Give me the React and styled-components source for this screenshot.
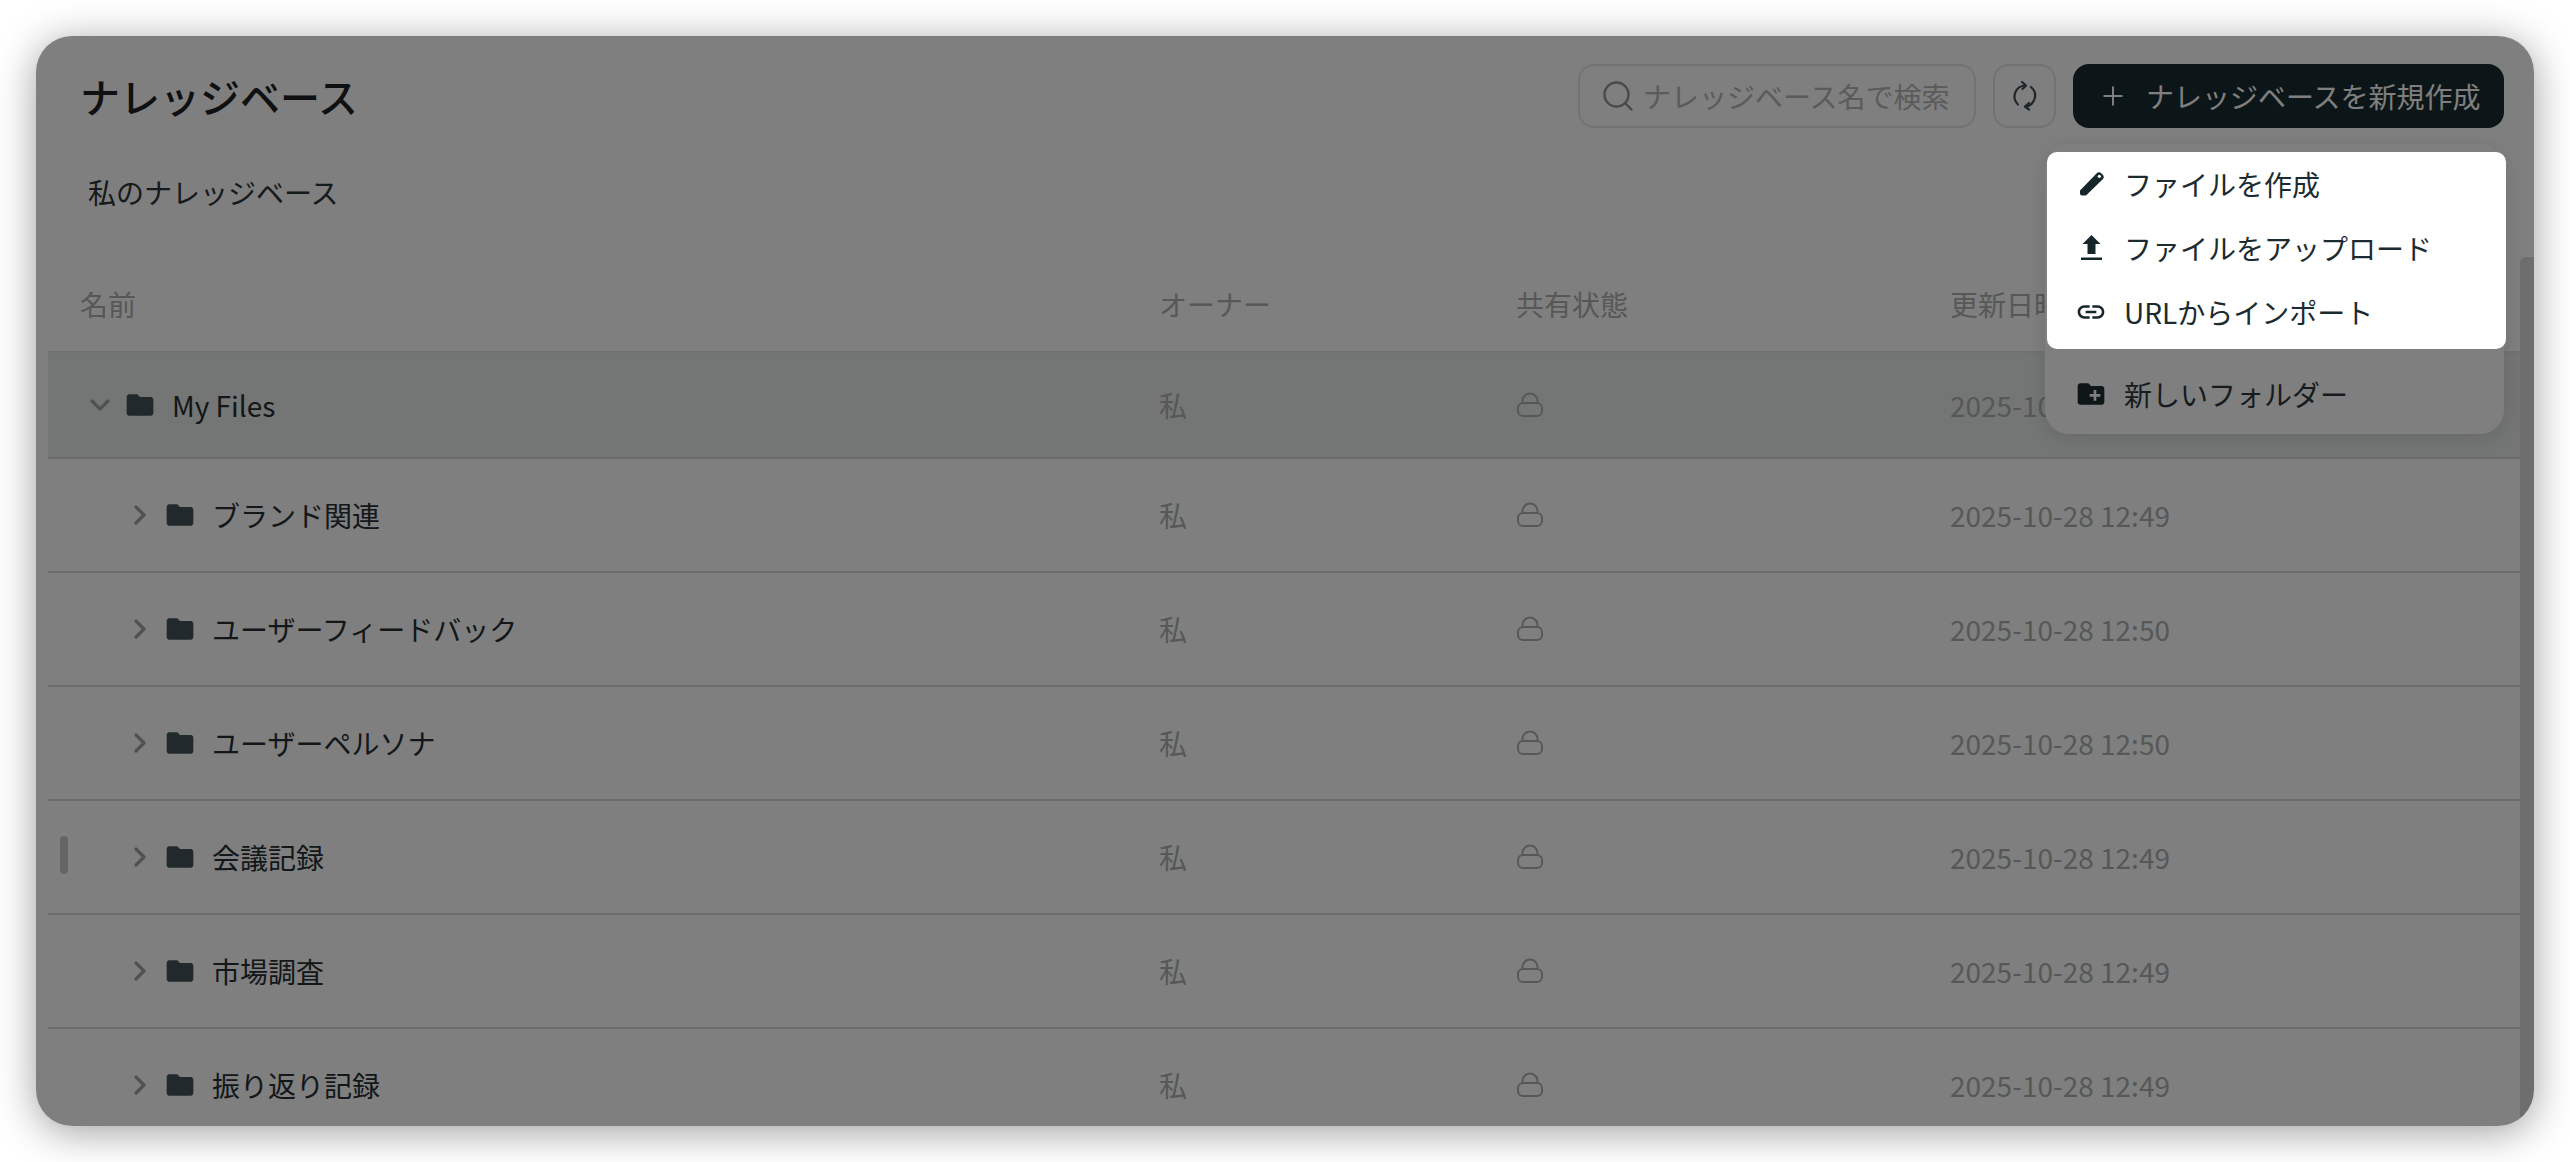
import React from "react";
import styled, { createGlobalStyle } from "styled-components";
import { Search, Plus, ChevronRight, ChevronDown } from "lucide-react";
import { MdFolder, MdLink, MdCreateNewFolder } from "react-icons/md";

const GlobalStyle = createGlobalStyle`
  html, body {
    margin: 0;
    background: #fff;
    font-family: "Noto Sans CJK JP", "Noto Sans", sans-serif;
  }
  * { box-sizing: border-box; }
`;

const Page = styled.div`
  width: 2570px;
  height: 1162px;
  padding: 36px;
  overflow: hidden;
`;

const Window = styled.div`
  position: relative;
  height: 1090px;
  background: #fff;
  border-radius: 36px;
  overflow: hidden;
  box-shadow: 0 6px 40px rgba(0, 0, 0, 0.38);
`;

const Header = styled.header`
  display: flex;
  align-items: center;
  padding: 28px 30px 0 44px;
`;

const Title = styled.h1`
  flex: 1;
  margin: 0;
  font-size: 40px;
  line-height: 64px;
  font-weight: 500;
  color: #1c2022;
`;

const SearchBox = styled.div`
  width: 398px;
  height: 64px;
  display: flex;
  align-items: center;
  gap: 7px;
  padding-left: 20px;
  border: 2px solid #e4e4e4;
  border-radius: 16px;
  font-size: 28px;
  color: #b4b6b6;
  white-space: nowrap;
  svg { color: #909494; }
`;

const RefreshButton = styled.div`
  width: 63px;
  height: 64px;
  margin-left: 17px;
  display: flex;
  align-items: center;
  justify-content: center;
  border: 2px solid #e4e4e4;
  border-radius: 16px;
  color: #3f4d52;
`;

const CreateButton = styled.div`
  width: 431px;
  height: 64px;
  margin-left: 17px;
  display: flex;
  align-items: center;
  gap: 18px;
  padding-left: 25px;
  background: #182a2e;
  border-radius: 16px;
  color: #fff;
  font-size: 28px;
  white-space: nowrap;
`;

const Tab = styled.div`
  margin: 44px 0 59px 52px;
  font-size: 28px;
  line-height: 40px;
  color: #2a3438;
`;

const Table = styled.div`
  margin: 0 14px 0 12px;
`;

const columns = "1079px 357px 434px 1fr";

const HeadRow = styled.div`
  display: grid;
  grid-template-columns: ${columns};
  align-items: center;
  height: 66px;
  margin-bottom: 14px;
  padding-left: 32px;
  font-size: 28px;
  color: #adb0b0;
`;

const Row = styled.div`
  display: grid;
  grid-template-columns: ${columns};
  align-items: center;
  height: ${(props) => (props.$open ? "108px" : "114px")};
  padding-left: 32px;
  background: ${(props) => (props.$open ? "#e9ebeb" : "transparent")};
  border-top: ${(props) => (props.$open ? "2px solid #e2e4e4" : "none")};
  border-bottom: 2px solid #d6d6d6;
  font-size: 28px;
  line-height: 40px;
`;

const NameCell = styled.div`
  display: flex;
  align-items: center;
  padding-left: ${(props) => props.$depth * 40}px;
  color: #262f33;
`;

const Toggle = styled.span`
  width: 40px;
  display: flex;
  justify-content: center;
  color: #a0a4a4;
`;

const FolderIcon = styled(MdFolder)`
  margin: 0 16px 0 4px;
  color: #445258;
`;

const MutedCell = styled.div`
  color: #adb0b0;
  svg { display: block; color: #adb0b0; }
`;

const Scrollbar = styled.div`
  position: absolute;
  top: 221px;
  right: 0;
  bottom: 0;
  width: 14px;
  background: #dcdcdc;
  border-radius: 6px 0 0 0;
`;

const DragHandle = styled.div`
  position: absolute;
  left: 24px;
  top: 800px;
  width: 8px;
  height: 38px;
  border-radius: 4px;
  background: #cbcbcb;
`;

const Menu = styled.div`
  position: absolute;
  top: 108px;
  right: 30px;
  width: 459px;
  height: 290px;
  padding-top: 218px;
  background: #fff;
  border-radius: 24px;
  box-shadow: 0 4px 24px rgba(0, 0, 0, 0.12);
`;

const Overlay = styled.div`
  position: absolute;
  inset: 0;
  background: rgba(0, 0, 0, 0.5);
`;

const MenuSpotlight = styled.div`
  position: absolute;
  top: 116px;
  right: 28px;
  width: 459px;
  height: 197px;
  background: #fff;
  border-radius: 10px;
`;

const MenuItem = styled.div`
  height: 64px;
  display: flex;
  align-items: center;
  gap: 17px;
  padding-left: ${(props) => (props.$lower ? "30px" : "28px")};
  font-size: 28px;
  color: ${(props) => (props.$lower ? "#2c373b" : "#1b2b30")};
  white-space: nowrap;
  svg { flex: none; color: ${(props) => (props.$lower ? "#1d2c30" : "#15262b")}; }
`;

function LockIcon() {
  return (
    <svg width="28" height="26" viewBox="0 0 28 26" fill="none" stroke="currentColor" strokeWidth="2">
      <rect x="2" y="11" width="24" height="13" rx="5" />
      <path d="M6.5 11V9a7.5 7.5 0 0 1 15 0v2" />
    </svg>
  );
}

function RefreshIcon() {
  return (
    <svg width="30" height="32" viewBox="0 0 30 32" fill="none" stroke="currentColor" strokeWidth="2.2" strokeLinecap="round" strokeLinejoin="round">
      <path d="M15 5.5A11 11 0 0 0 8 24.5" />
      <path d="M12 2l4 3.5L12.5 9" />
      <path d="M21 7A11 11 0 0 1 15 26.5" />
      <path d="M19 23l-4 3.5 4 3" />
    </svg>
  );
}

function PencilIcon() {
  return (
    <svg width="32" height="32" viewBox="0 0 32 32">
      <path fill="currentColor" d="M5 25.5V22.5L21.5 5.5a3.5 3.5 0 0 1 5 0l1 1a3.5 3.5 0 0 1 0 5L11 27.5H7a2 2 0 0 1-2-2z" />
      <circle cx="24.3" cy="8.3" r="1.6" fill="#fff" />
    </svg>
  );
}

function UploadIcon() {
  return (
    <svg width="32" height="32" viewBox="0 0 32 32" fill="currentColor">
      <path d="M16.5 3L25.5 12H20.5V22H12.5V12H7.5Z" />
      <rect x="6" y="25.5" width="21" height="2.5" />
    </svg>
  );
}

const rows = [
  { name: "ブランド関連", date: "2025-10-28 12:49" },
  { name: "ユーザーフィードバック", date: "2025-10-28 12:50" },
  { name: "ユーザーペルソナ", date: "2025-10-28 12:50" },
  { name: "会議記録", date: "2025-10-28 12:49" },
  { name: "市場調査", date: "2025-10-28 12:49" },
  { name: "振り返り記録", date: "2025-10-28 12:49" },
];

function FolderRow({ name, date, depth, open }) {
  return (
    <Row $open={open}>
      <NameCell $depth={depth}>
        <Toggle>{open ? <ChevronDown size={32} strokeWidth={2.4} /> : <ChevronRight size={32} strokeWidth={2.4} />}</Toggle>
        <FolderIcon size={32} />
        {name}
      </NameCell>
      <MutedCell>私</MutedCell>
      <MutedCell><LockIcon /></MutedCell>
      <MutedCell>{date}</MutedCell>
    </Row>
  );
}

export default function App() {
  return (
    <Page>
      <GlobalStyle />
      <Window>
        <Header>
          <Title>ナレッジベース</Title>
          <SearchBox>
            <Search size={36} strokeWidth={1.6} />
            <span>ナレッジベース名で検索</span>
          </SearchBox>
          <RefreshButton><RefreshIcon /></RefreshButton>
          <CreateButton>
            <Plus size={30} strokeWidth={1.6} />
            <span>ナレッジベースを新規作成</span>
          </CreateButton>
        </Header>
        <Tab>私のナレッジベース</Tab>
        <Table>
          <HeadRow>
            <div>名前</div>
            <div>オーナー</div>
            <div>共有状態</div>
            <div>更新日時</div>
          </HeadRow>
          <FolderRow name="My Files" date="2025-10-28 12:49" depth={0} open />
          {rows.map((row) => (
            <FolderRow key={row.name} name={row.name} date={row.date} depth={1} />
          ))}
        </Table>
        <Scrollbar />
        <DragHandle />
        <Menu>
          <MenuItem $lower>
            <MdCreateNewFolder size={32} />
            新しいフォルダー
          </MenuItem>
        </Menu>
        <Overlay />
        <MenuSpotlight>
          <MenuItem><PencilIcon />ファイルを作成</MenuItem>
          <MenuItem><UploadIcon />ファイルをアップロード</MenuItem>
          <MenuItem><MdLink size={32} />URLからインポート</MenuItem>
        </MenuSpotlight>
      </Window>
    </Page>
  );
}
